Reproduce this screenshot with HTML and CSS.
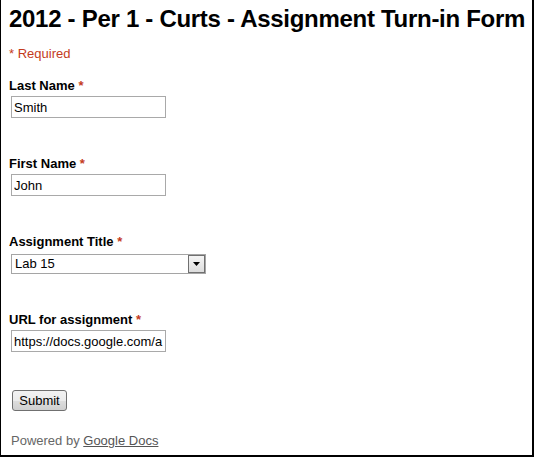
FILE: index.html
```html
<!DOCTYPE html>
<html>
<head>
<meta charset="utf-8">
<link rel="stylesheet" href="styles.css">
</head>
<body>
<div class="frame">
  <h1 class="title">2012 - Per 1 - Curts - Assignment Turn-in Form</h1>
  <div class="required-note">* Required</div>
  <div class="field">
    <label class="label">Last Name <span class="star">*</span></label>
    <input class="text-input" type="text" value="Smith">
  </div>
  <div class="field">
    <label class="label">First Name <span class="star">*</span></label>
    <input class="text-input" type="text" value="John">
  </div>
  <div class="field field-select">
    <label class="label">Assignment Title <span class="star">*</span></label>
    <div class="select">
      <span class="select-value">Lab 15</span>
      <span class="select-btn"><svg width="7" height="4" viewBox="0 0 7 4"><polygon points="0,0 7,0 3.5,4" fill="#000"/></svg></span>
    </div>
  </div>
  <div class="field">
    <label class="label">URL for assignment <span class="star">*</span></label>
    <input class="text-input" type="text" value="https://docs.google.com/a">
  </div>
  <div class="submit-row">
    <button class="submit" type="button">Submit</button>
  </div>
  <div class="footer">Powered by <a class="footer-link" href="#">Google Docs</a></div>
</div>
</body>
</html>
```
FILE: styles.css
```css
html, body {
  margin: 0;
  padding: 0;
  background: #fff;
}
.frame {
  box-sizing: border-box;
  width: 534px;
  height: 457px;
  border-left: 1px solid #000;
  border-right: 2px solid #000;
  border-bottom: 2px solid #000;
  padding: 5px 0 0 8px;
  font-family: Arial, "Liberation Sans", sans-serif;
  font-size: 13px;
  color: #000;
  display: flex;
  flex-direction: column;
  align-items: flex-start;
  overflow: hidden;
}
.title {
  margin: 0;
  font-size: 24px;
  line-height: 28px;
  font-weight: bold;
  letter-spacing: -0.29px;
  white-space: nowrap;
}
.required-note {
  margin-top: 13px;
  line-height: 15px;
  color: #c43b1d;
}
.field {
  display: flex;
  flex-direction: column;
  align-items: flex-start;
  margin-top: 17px;
}
.field + .field {
  margin-top: 38px;
}
.label {
  font-weight: bold;
  line-height: 15px;
  margin-bottom: 3px;
}
.field-select .label {
  margin-bottom: 5px;
}
.star {
  color: #c43b1d;
}
.text-input {
  box-sizing: border-box;
  width: 155px;
  height: 22px;
  margin: 0 0 0 2px;
  padding: 0 2px;
  border: 1px solid #a9a9a9;
  font-family: Arial, "Liberation Sans", sans-serif;
  font-size: 13px;
  color: #000;
  background: #fff;
  outline: none;
}
.select {
  box-sizing: border-box;
  width: 195px;
  height: 20px;
  margin-left: 2px;
  border: 1px solid #a5a5a5;
  display: flex;
  align-items: stretch;
  background: #fff;
}
.select-value {
  flex: 1;
  padding-left: 3px;
  line-height: 18px;
}
.select-btn {
  box-sizing: border-box;
  width: 17px;
  margin: 0;
  border: 1px solid #707070;
  background: linear-gradient(#f4f4f4, #dcdcdc);
  display: flex;
  align-items: center;
  justify-content: center;
}
.submit-row {
  margin-top: 38px;
}
.submit {
  box-sizing: border-box;
  width: 55px;
  height: 21px;
  margin-left: 3px;
  padding: 0;
  border: 1px solid #707070;
  border-radius: 3px;
  background: linear-gradient(#f2f2f2 0%, #ebebeb 50%, #dddddd 51%, #cfcfcf 100%);
  font-family: Arial, "Liberation Sans", sans-serif;
  font-size: 13px;
  color: #000;
}
.footer {
  margin-top: 22px;
  margin-left: 2px;
  line-height: 15px;
  color: #666;
}
.footer-link {
  color: #555;
  text-decoration: underline;
}
```
